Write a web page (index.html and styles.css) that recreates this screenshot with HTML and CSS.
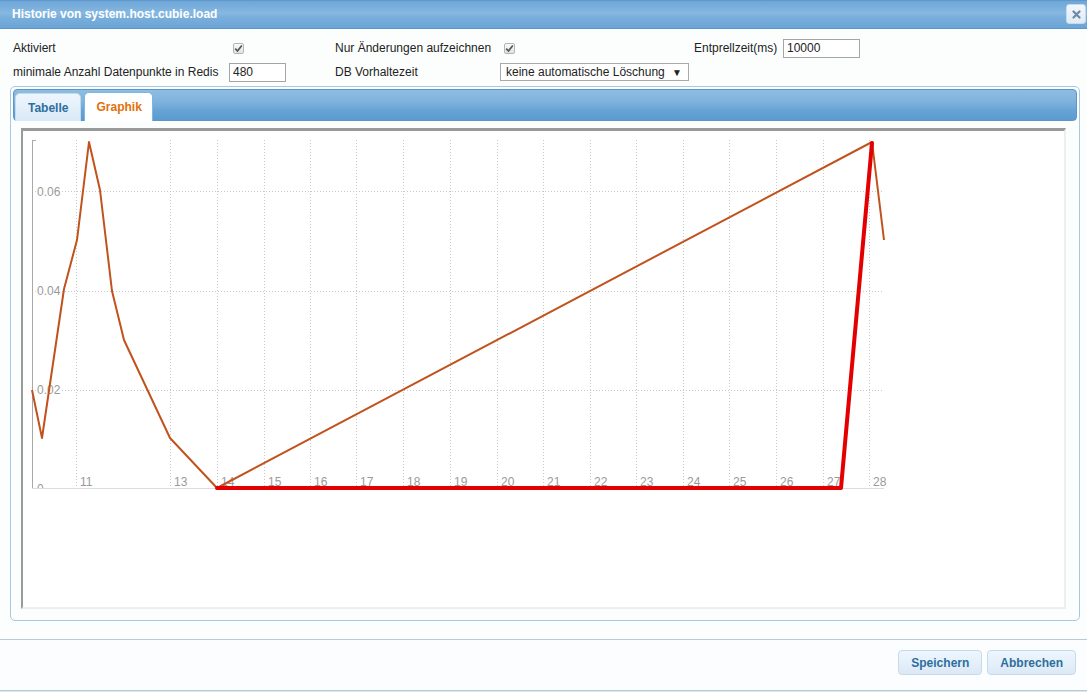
FILE: index.html
```html
<!DOCTYPE html>
<html lang="de">
<head>
<meta charset="utf-8">
<title>Historie</title>
<link rel="stylesheet" href="styles.css">
</head>
<body>
<div class="dialog">
  <div class="titlebar">
    <span class="title">Historie von system.host.cubie.load</span>
    <button class="close" aria-label="close">
      <svg width="9" height="9" viewBox="0 0 9 9"><path d="M1.5 1.5 L7.5 7.5 M7.5 1.5 L1.5 7.5" stroke="#6c89a4" stroke-width="2.2" stroke-linecap="round"/></svg>
    </button>
  </div>
  <div class="content">
    <div class="form">
      <label class="lbl">Aktiviert</label>
      <span class="cb"><svg width="9" height="9" viewBox="0 0 9 9"><path d="M1.2 4.6 L3.5 7 L7.8 1.5" fill="none" stroke="#555" stroke-width="1.7"/></svg></span>
      <label class="lbl">Nur Änderungen aufzeichnen</label>
      <span class="cb"><svg width="9" height="9" viewBox="0 0 9 9"><path d="M1.2 4.6 L3.5 7 L7.8 1.5" fill="none" stroke="#555" stroke-width="1.7"/></svg></span>
      <label class="lbl lbl-pad">Entprellzeit(ms)</label>
      <input class="inp w77" type="text" value="10000">

      <label class="lbl">minimale Anzahl Datenpunkte in Redis</label>
      <input class="inp w57" type="text" value="480">
      <label class="lbl">DB Vorhaltezeit</label>
      <div class="sel"><span class="sel-text">keine automatische Löschung</span><span class="sel-arrow">▼</span></div>
      <span></span>
      <span></span>
    </div>

    <div class="panel">
      <div class="tabbar">
        <div class="tab">Tabelle</div>
        <div class="tab active">Graphik</div>
      </div>
      <div class="chart">
        <svg class="plot" width="1041" height="476" viewBox="23 131 1041 476">
          <defs>
            <clipPath id="zeroclip"><rect x="30" y="470" width="40" height="18"/></clipPath>
          </defs>
          <g class="grid">
            <line x1="32" y1="191" x2="884" y2="191"/>
            <line x1="32" y1="291" x2="884" y2="291"/>
            <line x1="32" y1="390" x2="884" y2="390"/>
            <line x1="76" y1="140" x2="76" y2="488"/>
            <line x1="170" y1="140" x2="170" y2="488"/>
            <line x1="217" y1="140" x2="217" y2="488"/>
            <line x1="264" y1="140" x2="264" y2="488"/>
            <line x1="310" y1="140" x2="310" y2="488"/>
            <line x1="356" y1="140" x2="356" y2="488"/>
            <line x1="403" y1="140" x2="403" y2="488"/>
            <line x1="450" y1="140" x2="450" y2="488"/>
            <line x1="497" y1="140" x2="497" y2="488"/>
            <line x1="543" y1="140" x2="543" y2="488"/>
            <line x1="590" y1="140" x2="590" y2="488"/>
            <line x1="636" y1="140" x2="636" y2="488"/>
            <line x1="683" y1="140" x2="683" y2="488"/>
            <line x1="729" y1="140" x2="729" y2="488"/>
            <line x1="776" y1="140" x2="776" y2="488"/>
            <line x1="823" y1="140" x2="823" y2="488"/>
            <line x1="869" y1="140" x2="869" y2="488"/>
          </g>
          <line class="axis" x1="32.5" y1="140" x2="32.5" y2="489"/>
          <line class="axis" x1="32" y1="140.5" x2="36" y2="140.5"/>
          <line class="xaxis" x1="32" y1="488.5" x2="884" y2="488.5"/>
          <g class="ylab">
            <text x="37" y="196">0.06</text>
            <text x="37" y="295">0.04</text>
            <text x="37" y="394">0.02</text>
            <text x="37" y="493" clip-path="url(#zeroclip)">0</text>
          </g>
          <g class="xlab">
            <text x="80" y="486">11</text>
            <text x="174" y="486">13</text>
            <text x="221" y="486">14</text>
            <text x="268" y="486">15</text>
            <text x="314" y="486">16</text>
            <text x="360" y="486">17</text>
            <text x="407" y="486">18</text>
            <text x="454" y="486">19</text>
            <text x="501" y="486">20</text>
            <text x="547" y="486">21</text>
            <text x="594" y="486">22</text>
            <text x="640" y="486">23</text>
            <text x="687" y="486">24</text>
            <text x="733" y="486">25</text>
            <text x="780" y="486">26</text>
            <text x="827" y="486">27</text>
            <text x="873" y="486">28</text>
          </g>
          <polyline class="s-orange" points="32,390 42,438 64,289 77,240 89,142 100,190 112,291 124,340 170,438 217,488 872,142 884,240"/>
          <polyline class="s-red" points="217,488 841,488 872,143"/>
        </svg>
      </div>
    </div>
  </div>
  <div class="footer">
    <button class="btn">Speichern</button>
    <button class="btn">Abbrechen</button>
  </div>
</div>
</body>
</html>
```

FILE: styles.css
```css
* { box-sizing: border-box; }

html, body {
  margin: 0;
  padding: 0;
}

body {
  background: #dfe6ea;
  font-family: "Liberation Sans", Arial, sans-serif;
  font-size: 12px;
  color: #222;
}

.dialog {
  width: 1087px;
  height: 691px;
  background: #fcfefe;
  display: flex;
  flex-direction: column;
}

.titlebar {
  height: 29px;
  flex: none;
  display: flex;
  align-items: center;
  justify-content: space-between;
  padding: 0 1px 1px 12px;
  background: linear-gradient(to bottom, #6ea6d8 0%, #86b8e1 45%, #79afdc 60%, #6ba4d6 100%);
  border-top: 1px solid #5f98cc;
  border-bottom: 1px solid #5b95c9;
}

.title {
  color: #fff;
  font-weight: bold;
  font-size: 12px;
}

.close {
  width: 20px;
  height: 20px;
  padding: 0;
  margin: 0;
  border: 1px solid #c5dbec;
  border-radius: 3px;
  background: linear-gradient(#f2f7fc, #dfebf6);
  display: flex;
  align-items: center;
  justify-content: center;
}

.content {
  flex: 1;
  padding: 7px 7px 0 10px;
  display: flex;
  flex-direction: column;
}

.form {
  display: grid;
  grid-template-columns: 216px 106px 165px 190px 93px auto;
  grid-template-rows: 24px 24px;
  align-items: center;
  margin-left: 3px;
}

.lbl {
  white-space: nowrap;
}

.lbl-pad {
  padding-left: 4px;
}

.cb {
  width: 11px;
  height: 11px;
  margin-left: 4px;
  border: 1px solid #b5b5b5;
  border-radius: 2px;
  background: linear-gradient(#fafafa, #e2e2e2);
  display: flex;
  align-items: center;
  justify-content: center;
}

.inp {
  height: 19px;
  border: 1px solid #a5a5a5;
  padding: 0 3px;
  font-family: "Liberation Sans", Arial, sans-serif;
  font-size: 12px;
  color: #222;
  background: #fff;
}

.w57 { width: 57px; }
.w77 { width: 77px; }

.sel {
  width: 189px;
  height: 18px;
  border: 1px solid #a9a9a9;
  background: #fff;
  display: flex;
  align-items: center;
  justify-content: space-between;
  padding: 0 6px 0 5px;
}

.sel-arrow {
  font-size: 10px;
}

.panel {
  margin-top: 2px;
  height: 535px;
  border: 1px solid #a6c9e2;
  border-radius: 5px;
  padding: 2px;
  background: #fcfefe;
}

.tabbar {
  height: 32px;
  display: flex;
  align-items: flex-end;
  gap: 3px;
  padding-left: 1px;
  border: 1px solid #5b97cc;
  border-radius: 4px;
  background: linear-gradient(to bottom, #8fbde2 0%, #7fb2dc 40%, #66a2d5 70%, #5c9ad0 100%);
}

.tab {
  height: 28px;
  margin-bottom: -1px;
  padding: 0 12px;
  display: flex;
  align-items: center;
  font-weight: bold;
  color: #2e6e9e;
  background: linear-gradient(#eef6fd, #d8e9f8);
  border: 1px solid #c5dbec;
  border-bottom: none;
  border-radius: 5px 5px 0 0;
}

.tab.active {
  height: 29px;
  padding: 0 10px 0 11px;
  color: #e17009;
  background: #fff;
  border-color: #79b7e7;
}

.chart {
  margin: 7px 10px 0 8px;
  width: 1045px;
  height: 481px;
  background: #fff;
  border-top: 3px solid #9a9a9a;
  border-left: 2px solid #9a9a9a;
  border-right: 2px solid #eeeeee;
  border-bottom: 2px solid #eeeeee;
}

.plot {
  display: block;
}

.grid line {
  stroke: #c8c8c8;
  stroke-width: 1;
  stroke-dasharray: 1 2;
  shape-rendering: crispEdges;
}

.axis {
  stroke: #a8a8a8;
  stroke-width: 1;
}

.xaxis {
  stroke: #dcdcdc;
  stroke-width: 1;
}

.ylab text, .xlab text {
  font-family: "Liberation Sans", Arial, sans-serif;
  font-size: 12px;
  fill: #9a9a9a;
}

.ylab text {
  paint-order: stroke;
  stroke: #fff;
  stroke-width: 3px;
}

.s-orange {
  fill: none;
  stroke: #c2521d;
  stroke-width: 2;
  stroke-linejoin: round;
}

.s-red {
  fill: none;
  stroke: #e40000;
  stroke-width: 4;
  stroke-linejoin: round;
  stroke-linecap: round;
}

.footer {
  flex: none;
  height: 52px;
  border-top: 1px solid #b4cbd8;
  border-bottom: 1px solid #b4cbd8;
  background: #fbfdfe;
  display: flex;
  justify-content: flex-end;
  align-items: flex-start;
  gap: 5px;
  padding: 10px 11px 0 0;
}

.btn {
  height: 25px;
  padding: 0 12px;
  border: 1px solid #c5dbec;
  border-radius: 4px;
  background: linear-gradient(#eef6fd, #dbe9f6);
  color: #2e6e9e;
  font-family: "Liberation Sans", Arial, sans-serif;
  font-size: 12px;
  font-weight: bold;
}
```
